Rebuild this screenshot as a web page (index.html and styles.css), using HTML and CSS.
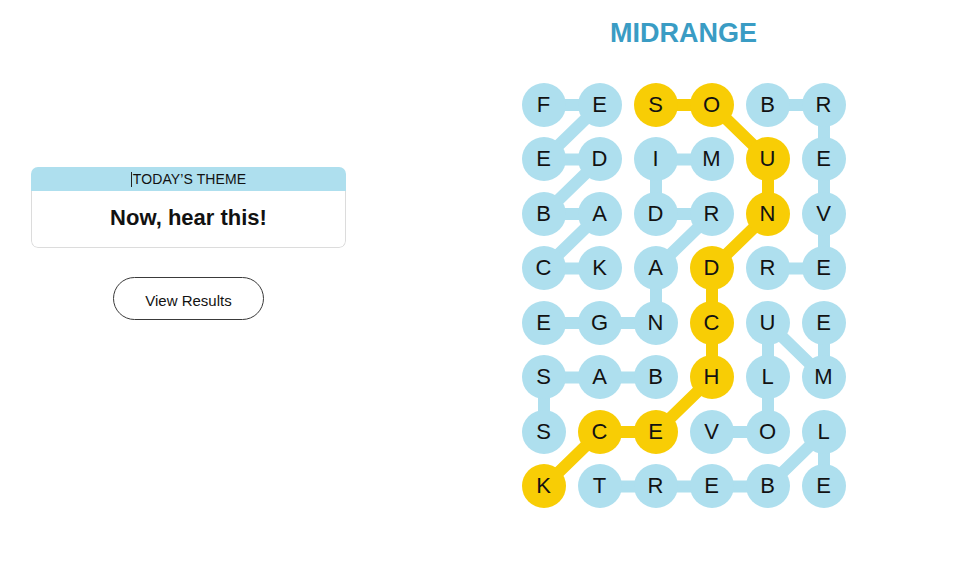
FILE: index.html
```html
<!DOCTYPE html>
<html lang="en">
<head>
<meta charset="utf-8">
<title>Strands</title>
<link rel="stylesheet" href="styles.css">
</head>
<body>
<div class="app">
  <aside class="side">
    <div class="theme-card">
      <div class="theme-head"><span class="caret"></span>TODAY’S THEME</div>
      <div class="theme-body">Now, hear this!</div>
    </div>
    <button class="results-btn">View Results</button>
  </aside>
  <main class="play">
    <h1 class="found-word">MIDRANGE</h1>
    <div class="board">
      <svg class="links" width="324" height="426" viewBox="0 0 324 426">
        <g stroke="#aedfee" stroke-width="12" stroke-linecap="round" fill="none">
          <polyline points="22,22 78,22 22,76.5 78,76.5 22,131 78,131 22,185.5 78,185.5"/>
          <polyline points="190,76.5 134,76.5 134,131 190,131 134,185.5 134,240 22,240"/>
          <polyline points="246,22 302,22 302,185.5 246,185.5"/>
          <polyline points="134,294.5 22,294.5 22,349"/>
          <polyline points="190,349 246,349 246,240 302,294.5 302,240"/>
          <polyline points="78,403.5 246,403.5 302,349 302,403.5"/>
        </g>
        <polyline stroke="#f8cd05" stroke-width="12" stroke-linecap="round" stroke-linejoin="round" fill="none"
          points="134,22 190,22 246,76.5 246,131 190,185.5 190,294.5 134,349 78,349 22,403.5"/>
      </svg>
      <div class="cell">F</div><div class="cell">E</div><div class="cell span">S</div><div class="cell span">O</div><div class="cell">B</div><div class="cell">R</div>
      <div class="cell">E</div><div class="cell">D</div><div class="cell">I</div><div class="cell">M</div><div class="cell span">U</div><div class="cell">E</div>
      <div class="cell">B</div><div class="cell">A</div><div class="cell">D</div><div class="cell">R</div><div class="cell span">N</div><div class="cell">V</div>
      <div class="cell">C</div><div class="cell">K</div><div class="cell">A</div><div class="cell span">D</div><div class="cell">R</div><div class="cell">E</div>
      <div class="cell">E</div><div class="cell">G</div><div class="cell">N</div><div class="cell span">C</div><div class="cell">U</div><div class="cell">E</div>
      <div class="cell">S</div><div class="cell">A</div><div class="cell">B</div><div class="cell span">H</div><div class="cell">L</div><div class="cell">M</div>
      <div class="cell">S</div><div class="cell span">C</div><div class="cell span">E</div><div class="cell">V</div><div class="cell">O</div><div class="cell">L</div>
      <div class="cell span">K</div><div class="cell">T</div><div class="cell">R</div><div class="cell">E</div><div class="cell">B</div><div class="cell">E</div>
    </div>
  </main>
</div>
</body>
</html>
```
FILE: styles.css
```css
* { box-sizing: border-box; }
html, body { margin: 0; padding: 0; background: #fff; }
body {
  font-family: "Liberation Sans", Arial, sans-serif;
  color: #121212;
  width: 959px;
  height: 566px;
  overflow: hidden;
}
.app {
  display: flex;
  align-items: flex-start;
}
.side {
  width: 346px;
  padding: 167px 0 0 31px;
  display: flex;
  flex-direction: column;
  align-items: center;
}
.theme-card {
  width: 315px;
  border-radius: 7px;
  overflow: hidden;
}
.theme-head {
  background: #aedfee;
  height: 24px;
  line-height: 24px;
  font-size: 14px;
  letter-spacing: 0.1px;
  text-align: center;
  color: #121212;
}
.caret {
  display: inline-block;
  width: 1px;
  height: 15px;
  background: #222;
  vertical-align: -3px;
  margin-right: 1px;
}
.theme-body {
  border: 1px solid #dcdcdc;
  border-top: none;
  border-radius: 0 0 7px 7px;
  padding: 14px 0 16px;
  font-size: 22px;
  line-height: 26px;
  font-weight: bold;
  text-align: center;
}
.results-btn {
  margin-top: 29px;
  width: 151px;
  height: 43px;
  border: 1px solid #3a3a3a;
  border-radius: 22px;
  background: #fff;
  font-family: "Liberation Sans", Arial, sans-serif;
  font-size: 15px;
  color: #121212;
  padding: 3px 0 0;
}
.play {
  margin-left: 175.5px;
  padding-top: 19.5px;
  width: 324px;
}
.found-word {
  margin: 0 0 36px;
  font-size: 27px;
  line-height: 27px;
  font-weight: bold;
  color: #3a9cc4;
  text-align: center;
}
.board {
  position: relative;
  display: grid;
  grid-template-columns: repeat(6, 44px);
  grid-template-rows: repeat(8, 44px);
  column-gap: 12px;
  row-gap: 10.5px;
}
.links {
  position: absolute;
  left: 0;
  top: 0;
  z-index: 0;
}
.cell {
  position: relative;
  z-index: 1;
  width: 44px;
  height: 44px;
  border-radius: 50%;
  background: #aedfee;
  display: flex;
  align-items: center;
  justify-content: center;
  font-size: 22px;
  color: #121212;
}
.cell.span { background: #f8cd05; }
```
